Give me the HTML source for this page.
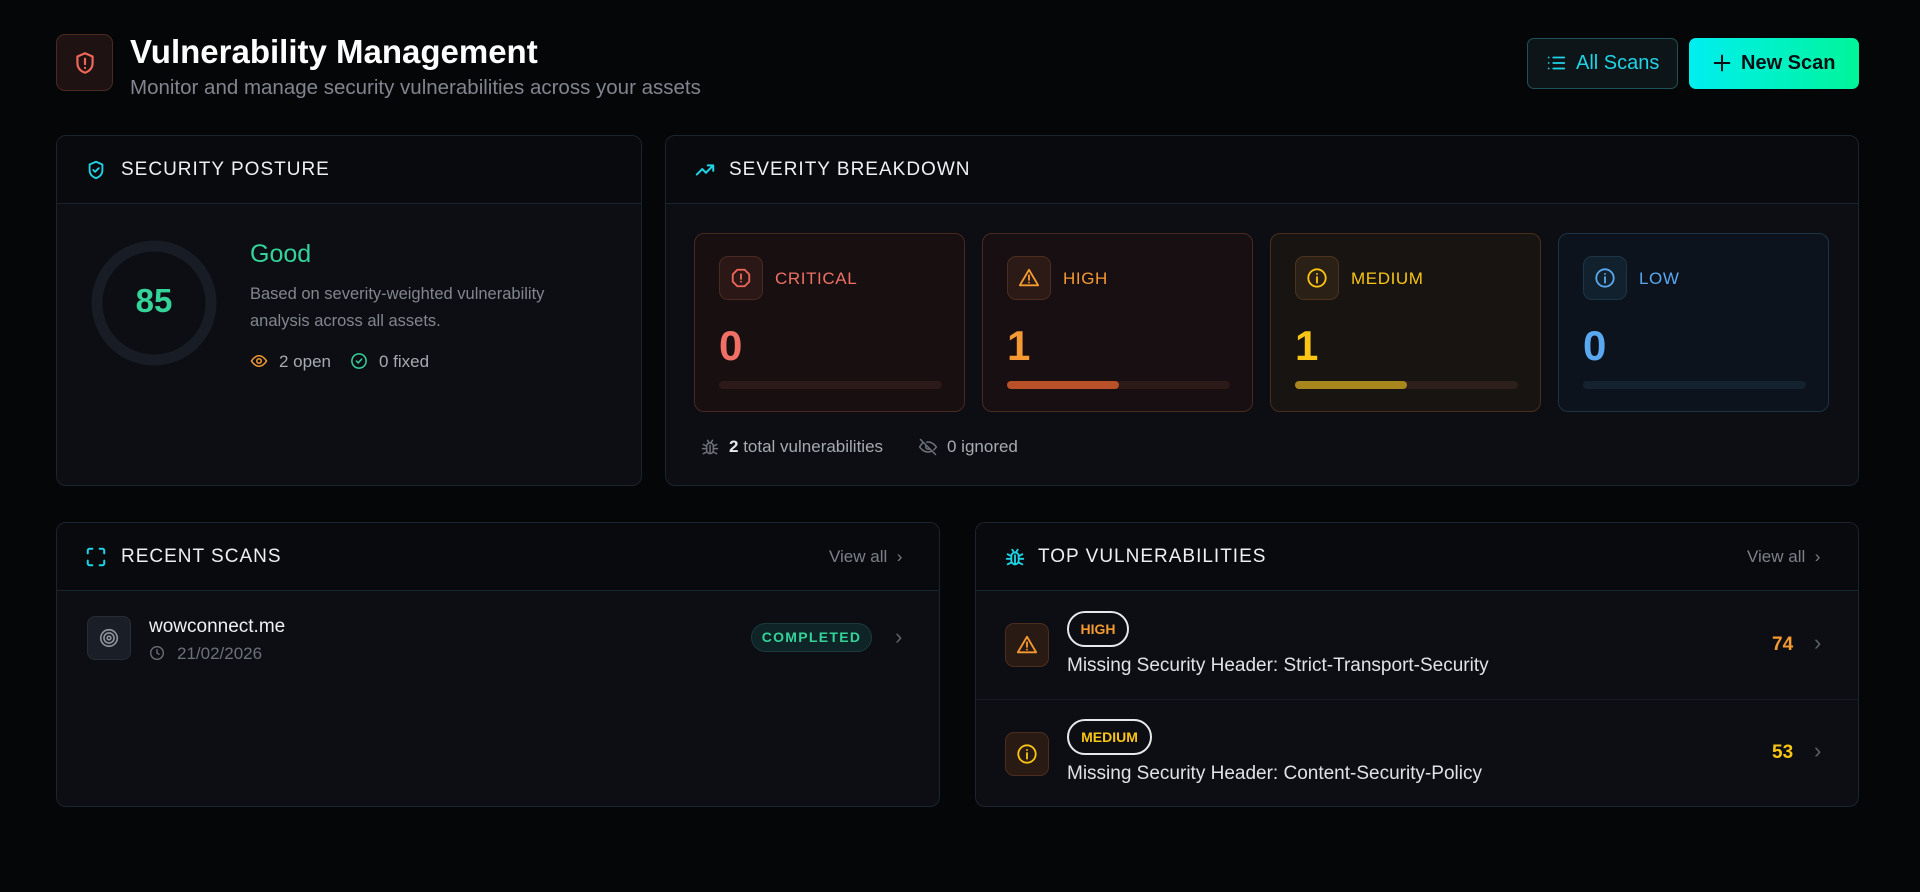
<!DOCTYPE html>
<html><head><meta charset="utf-8"><style>
*{box-sizing:border-box;margin:0;padding:0}
body{width:1920px;height:892px;background:#050608;font-family:"Liberation Sans",sans-serif;color:#e8eaee;position:relative;overflow:hidden}
.abs{position:absolute}
.card{position:absolute;background:#0c0e13;border:1px solid #1a2530;border-radius:10px;overflow:hidden}
.chd{position:absolute;left:0;right:0;top:0;height:68px;background:#090a0e;border-bottom:1px solid #172530}
.ct{position:absolute;top:23px;font-size:19px;letter-spacing:1px;color:#eef0f3}
.sev{position:absolute;top:97px;width:271px;height:179px;border-radius:10px}
.ib{position:absolute;left:24px;top:22px;width:44px;height:44px;border-radius:9px}
.lbl{position:absolute;left:80px;top:35px;font-size:17px;letter-spacing:0.6px}
.num{position:absolute;left:24px;top:88px;font-size:42px;font-weight:bold}
.bar{position:absolute;left:24px;top:147px;width:223px;height:8px;border-radius:4px}
.va{position:absolute;top:24px;font-size:17px;color:#7b808a}
</style></head><body>
<div class="abs" style="left:56px;top:34px;width:57px;height:57px;border-radius:9px;background:#1e1212;border:1px solid #4a2a22"></div>
<svg class="abs" style="left:72px;top:50px" width="26" height="26" viewBox="0 0 24 24" fill="none" stroke="#f0675a" stroke-width="2" stroke-linecap="round" stroke-linejoin="round"><path d="M12 3l7 3v6c0 4.5-3 7.5-7 9-4-1.5-7-4.5-7-9V6z"/><path d="M12 8v5M12 16.5v.1"/></svg>
<div class="abs" style="left:130px;top:33px;font-size:33px;font-weight:bold;color:#fff">Vulnerability Management</div>
<div class="abs" style="left:130px;top:76px;font-size:20.5px;color:#80858f">Monitor and manage security vulnerabilities across your assets</div>
<div class="abs" style="left:1527px;top:38px;width:151px;height:51px;border:1px solid #1f5158;border-radius:7px;background:#0d1519;color:#1fd4e6;font-size:20px;line-height:49px;padding-left:48px">All Scans</div>
<svg class="abs" style="left:1545px;top:52px" width="22" height="22" viewBox="0 0 24 24" fill="none" stroke="#1fd4e6" stroke-width="2" stroke-linecap="round"><path d="M4 6h.01M4 12h.01M4 18h.01M9 6h12M9 12h12M9 18h12"/></svg>
<div class="abs" style="left:1689px;top:38px;width:170px;height:51px;border-radius:7px;background:linear-gradient(90deg,#00eef0,#00f59a);color:#061014;font-size:20px;font-weight:bold;line-height:51px;padding-left:52px">New Scan</div>
<svg class="abs" style="left:1711px;top:52px" width="22" height="22" viewBox="0 0 24 24" fill="none" stroke="#061014" stroke-width="2.2" stroke-linecap="round"><path d="M12 4v16M4 12h16"/></svg>

<div class="card" style="left:56px;top:135px;width:586px;height:351px">
<div class="chd"></div>
<svg class="abs" style="left:28px;top:23px" width="22" height="22" viewBox="0 0 24 24" fill="none" stroke="#1fd4e6" stroke-width="2" stroke-linecap="round" stroke-linejoin="round"><path d="M12 3l7 3v6c0 4.5-3 7.5-7 9-4-1.5-7-4.5-7-9V6z"/><path d="M9 12l2 2 4-4"/></svg>
<div class="ct" style="left:64px">SECURITY POSTURE</div>
<svg class="abs" style="left:34px;top:104px" width="126" height="126"><circle cx="63" cy="63" r="57" fill="none" stroke="#171c25" stroke-width="11"/></svg>
<div class="abs" style="left:34px;top:146px;width:126px;text-align:center;font-size:33px;font-weight:bold;color:#34d399">85</div>
<div class="abs" style="left:193px;top:104px;font-size:25px;color:#34d399">Good</div>
<div class="abs" style="left:193px;top:145px;font-size:16.5px;line-height:27px;color:#82868f;width:330px">Based on severity-weighted vulnerability analysis across all assets.</div>
<svg class="abs" style="left:193px;top:216px" width="18" height="18" viewBox="0 0 24 24" fill="none" stroke="#f59a32" stroke-width="2"><path d="M2 12s4-7 10-7 10 7 10 7-4 7-10 7S2 12 2 12z"/><circle cx="12" cy="12" r="3"/></svg>
<div class="abs" style="left:222px;top:216px;font-size:17px;color:#a6aab2">2 open</div>
<svg class="abs" style="left:293px;top:216px" width="18" height="18" viewBox="0 0 24 24" fill="none" stroke="#34d399" stroke-width="2" stroke-linecap="round"><circle cx="12" cy="12" r="9.5"/><path d="M8.5 12l2.5 2.5 4.5-5"/></svg>
<div class="abs" style="left:322px;top:216px;font-size:17px;color:#a6aab2">0 fixed</div>
</div>

<div class="card" style="left:665px;top:135px;width:1194px;height:351px">
<div class="chd"></div>
<svg class="abs" style="left:28px;top:23px" width="22" height="22" viewBox="0 0 24 24" fill="none" stroke="#1fd4e6" stroke-width="2.2" stroke-linecap="round" stroke-linejoin="round"><path d="M3 17l6-6 4 4 8-8M15 7h6v6"/></svg>
<div class="ct" style="left:63px">SEVERITY BREAKDOWN</div>

<div class="sev" style="left:28px;background:#170f10;border:1px solid #4a2720">
<div class="ib" style="background:#2b1816;border:1px solid #4a2a22"></div>
<svg class="abs" style="left:35px;top:33px" width="22" height="22" viewBox="0 0 24 24" fill="none" stroke="#f0675a" stroke-width="2" stroke-linecap="round"><path d="M8 3h8l5 5v8l-5 5H8l-5-5V8z"/><path d="M12 8v5M12 16v.1"/></svg>
<div class="lbl" style="color:#f07066">CRITICAL</div><div class="num" style="color:#f07066">0</div>
<div class="bar" style="background:#2b1a18"></div></div>

<div class="sev" style="left:316px;background:#180f12;border:1px solid #4a2a1e">
<div class="ib" style="background:#2b1a16;border:1px solid #4d2d1e"></div>
<svg class="abs" style="left:35px;top:33px" width="22" height="22" viewBox="0 0 24 24" fill="none" stroke="#f59a32" stroke-width="2" stroke-linecap="round" stroke-linejoin="round"><path d="M12 3L2 20h20z"/><path d="M12 9v5M12 17v.1"/></svg>
<div class="lbl" style="color:#f59a32">HIGH</div><div class="num" style="color:#f59a32">1</div>
<div class="bar" style="background:#2b1a18"><div style="width:50%;height:8px;border-radius:4px;background:#b85128"></div></div></div>

<div class="sev" style="left:604px;background:#181412;border:1px solid #4a2e1c">
<div class="ib" style="background:#2b2016;border:1px solid #4d331e"></div>
<svg class="abs" style="left:35px;top:33px" width="22" height="22" viewBox="0 0 24 24" fill="none" stroke="#fac515" stroke-width="2" stroke-linecap="round"><circle cx="12" cy="12" r="9.5"/><path d="M12 11v6M12 7.5v.1"/></svg>
<div class="lbl" style="color:#fac515">MEDIUM</div><div class="num" style="color:#fac515">1</div>
<div class="bar" style="background:#2d1f1a"><div style="width:50%;height:8px;border-radius:4px;background:#a8861e"></div></div></div>

<div class="sev" style="left:892px;background:#0d131c;border:1px solid #1b3344">
<div class="ib" style="background:#12212e;border:1px solid #1d3546"></div>
<svg class="abs" style="left:35px;top:33px" width="22" height="22" viewBox="0 0 24 24" fill="none" stroke="#5aa8f0" stroke-width="2" stroke-linecap="round"><circle cx="12" cy="12" r="9.5"/><path d="M12 11v6M12 7.5v.1"/></svg>
<div class="lbl" style="color:#5aa8f0">LOW</div><div class="num" style="color:#5aa8f0">0</div>
<div class="bar" style="background:#142230"></div></div>

<svg class="abs" style="left:34px;top:301px" width="20" height="20" viewBox="0 0 24 24" fill="none" stroke="#6c717a" stroke-width="1.8" stroke-linecap="round"><rect x="8" y="7" width="8" height="13" rx="4"/><path d="M12 10v10M9 4l2 3M15 4l-2 3M4 9l4 2M20 9l-4 2M3 14h5M21 14h-5M4 20l4-2M20 20l-4-2"/></svg>
<div class="abs" style="left:63px;top:301px;font-size:17px;color:#a6aab2"><b style="color:#e8eaee">2</b> total vulnerabilities</div>
<svg class="abs" style="left:252px;top:301px" width="20" height="20" viewBox="0 0 24 24" fill="none" stroke="#6c717a" stroke-width="1.8" stroke-linecap="round"><path d="M3 3l18 18M10.6 6.1A9 9 0 0 1 12 6c6 0 10 6 10 6a17 17 0 0 1-3 3.4M6.6 6.6C3.8 8.4 2 12 2 12s4 6 10 6c1.8 0 3.4-.5 4.8-1.3M9.9 9.9a3 3 0 0 0 4.2 4.2"/></svg>
<div class="abs" style="left:281px;top:301px;font-size:17px;color:#a6aab2">0 ignored</div>
</div>

<div class="card" style="left:56px;top:522px;width:884px;height:285px">
<div class="chd"></div>
<svg class="abs" style="left:28px;top:23px" width="22" height="22" viewBox="0 0 24 24" fill="none" stroke="#1fd4e6" stroke-width="2.2" stroke-linecap="round"><path d="M3 8V5a2 2 0 0 1 2-2h3M16 3h3a2 2 0 0 1 2 2v3M21 16v3a2 2 0 0 1-2 2h-3M8 21H5a2 2 0 0 1-2-2v-3"/></svg>
<div class="ct" style="left:64px">RECENT SCANS</div>
<div class="va" style="left:772px">View all &nbsp;›</div>
<div class="abs" style="left:30px;top:93px;width:44px;height:44px;border-radius:8px;background:#1a1e27;border:1px solid #272c36"></div>
<svg class="abs" style="left:41px;top:104px" width="22" height="22" viewBox="0 0 24 24" fill="none" stroke="#8d929b" stroke-width="1.8"><circle cx="12" cy="12" r="9"/><circle cx="12" cy="12" r="5.5"/><circle cx="12" cy="12" r="2"/></svg>
<div class="abs" style="left:92px;top:93px;font-size:19px;color:#eef0f3">wowconnect.me</div>
<svg class="abs" style="left:92px;top:122px" width="16" height="16" viewBox="0 0 24 24" fill="none" stroke="#6c717a" stroke-width="2" stroke-linecap="round"><circle cx="12" cy="12" r="9.5"/><path d="M12 7v5l3 2"/></svg>
<div class="abs" style="left:120px;top:121px;font-size:17px;color:#6c717a">21/02/2026</div>
<div class="abs" style="left:694px;top:100px;width:121px;height:29px;border-radius:15px;background:#0f2426;border:1px solid #1c3a3c;color:#34d399;font-size:14px;letter-spacing:1.3px;text-align:center;line-height:27px;font-weight:bold">COMPLETED</div>
<div class="abs" style="left:838px;top:101px;font-size:22px;color:#5c616a">›</div>
</div>

<div class="card" style="left:975px;top:522px;width:884px;height:285px">
<div class="chd"></div>
<svg class="abs" style="left:28px;top:23px" width="22" height="22" viewBox="0 0 24 24" fill="none" stroke="#1fd4e6" stroke-width="2" stroke-linecap="round"><rect x="8" y="7" width="8" height="13" rx="4"/><path d="M12 10v10M9 4l2 3M15 4l-2 3M4 9l4 2M20 9l-4 2M3 14h5M21 14h-5M4 20l4-2M20 20l-4-2"/></svg>
<div class="ct" style="left:62px">TOP VULNERABILITIES</div>
<div class="va" style="left:771px">View all &nbsp;›</div>
<div class="abs" style="left:0;right:0;top:176px;height:1px;background:#151c25"></div>

<div class="abs" style="left:29px;top:100px;width:44px;height:44px;border-radius:9px;background:#2a1a14;border:1px solid #4d2d1e"></div>
<svg class="abs" style="left:40px;top:111px" width="22" height="22" viewBox="0 0 24 24" fill="none" stroke="#f59a32" stroke-width="2" stroke-linecap="round" stroke-linejoin="round"><path d="M12 3L2 20h20z"/><path d="M12 9v5M12 17v.1"/></svg>
<div class="abs" style="left:91px;top:88px;width:62px;height:36px;border-radius:18px;border:2px solid #e6e8ec;color:#f59a32;font-size:14px;font-weight:bold;text-align:center;line-height:32px">HIGH</div>
<div class="abs" style="left:91px;top:132px;font-size:19px;color:#dfe2e6">Missing Security Header: Strict-Transport-Security</div>
<div class="abs" style="left:796px;top:111px;font-size:19px;font-weight:bold;color:#f59a32">74</div>
<div class="abs" style="left:838px;top:107px;font-size:22px;color:#5c616a">›</div>

<div class="abs" style="left:29px;top:209px;width:44px;height:44px;border-radius:9px;background:#2a1a14;border:1px solid #4d2d1e"></div>
<svg class="abs" style="left:40px;top:220px" width="22" height="22" viewBox="0 0 24 24" fill="none" stroke="#fac515" stroke-width="2" stroke-linecap="round"><circle cx="12" cy="12" r="9.5"/><path d="M12 11v6M12 7.5v.1"/></svg>
<div class="abs" style="left:91px;top:196px;width:85px;height:36px;border-radius:18px;border:2px solid #e6e8ec;color:#fac515;font-size:14px;font-weight:bold;text-align:center;line-height:32px">MEDIUM</div>
<div class="abs" style="left:91px;top:240px;font-size:19px;color:#dfe2e6">Missing Security Header: Content-Security-Policy</div>
<div class="abs" style="left:796px;top:219px;font-size:19px;font-weight:bold;color:#fac515">53</div>
<div class="abs" style="left:838px;top:215px;font-size:22px;color:#5c616a">›</div>
</div>
</body></html>
